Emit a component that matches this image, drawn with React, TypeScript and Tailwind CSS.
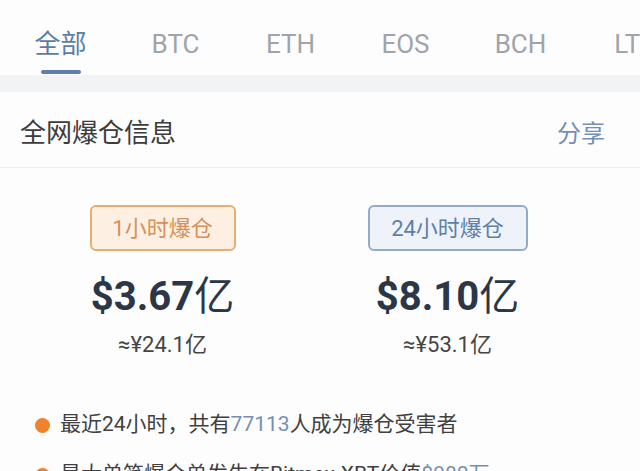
import React from 'react';

const tabs = ['全部', 'BTC', 'ETH', 'EOS', 'BCH', 'LTC'];

export default function App() {
  return (
    <div
      className="w-[640px] h-[471px] overflow-hidden bg-[#fdfdfe] text-[#3a3a3a]"
      style={{ fontFamily: 'Roboto, "Noto Sans CJK SC", sans-serif' }}
    >
      {/* Tabs */}
      <div className="h-[75px] flex pl-[3px] whitespace-nowrap">
        {tabs.map((t, i) => (
          <div key={t} className="w-[115px] shrink-0 flex flex-col items-center">
            <div
              className={
                'mt-[25px] h-[38px] leading-[38px] text-[26px] ' +
                (i === 0 ? 'text-[#5b7ea8]' : 'text-[#a0a4a9]')
              }
            >
              {t}
            </div>
            {i === 0 && <div className="mt-[7px] w-[40px] h-[4px] rounded-full bg-[#5d7fa8]" />}
          </div>
        ))}
      </div>
      <div className="h-[17px] bg-[#f2f3f5]" />

      {/* Header */}
      <div className="h-[76px] flex items-center justify-between pl-5 pr-[35px] pt-[8px] border-b border-[#eceef0]">
        <div className="text-[26px] text-[#3c3c3c]">全网爆仓信息</div>
        <div className="text-[24px] text-[#7190b6]">分享</div>
      </div>

      {/* Stats */}
      <div className="grid grid-cols-2 pl-5 pr-[50px] pt-[37px]">
        <div className="flex flex-col items-center">
          <div className="w-[146px] h-[46px] rounded-[6px] border-2 border-[#e9ad72] bg-[#fdf0e3] flex items-center justify-center text-[22px] text-[#d4905a]">
            1小时爆仓
          </div>
          <div className="mt-[21px] h-[50px] leading-[50px] text-[40px] font-bold text-[#2b3746]">
            $3.67<span className="font-normal">亿</span>
          </div>
          <div className="mt-[8px] text-[22px] leading-[30px] text-[#454545]">≈¥24.1亿</div>
        </div>
        <div className="flex flex-col items-center">
          <div className="w-[160px] h-[46px] rounded-[6px] border-2 border-[#93abc8] bg-[#eef3fa] flex items-center justify-center text-[22px] text-[#5f7fa6]">
            24小时爆仓
          </div>
          <div className="mt-[21px] h-[50px] leading-[50px] text-[40px] font-bold text-[#2b3746]">
            $8.10<span className="font-normal">亿</span>
          </div>
          <div className="mt-[8px] text-[22px] leading-[30px] text-[#454545]">≈¥53.1亿</div>
        </div>
      </div>

      {/* Bullets */}
      <div className="mt-[50px] pl-[35px] flex flex-col gap-[20px] text-[21px] whitespace-nowrap">
        <div className="flex items-center h-[30px]">
          <span className="w-[15px] h-[15px] rounded-full bg-[#f0822c] shrink-0" />
          <span className="ml-[10px] text-[#404040]">
            最近24小时，共有<span className="text-[#7390b3]">77113</span>人成为爆仓受害者
          </span>
        </div>
        <div className="flex items-center h-[30px]">
          <span className="w-[15px] h-[15px] rounded-full bg-[#f0822c] shrink-0" />
          <span className="ml-[10px] text-[#404040]">
            最大单笔爆仓单发生在Bitmex-XBT价值<span className="text-[#7390b3]">$980万</span>
          </span>
        </div>
      </div>
    </div>
  );
}
